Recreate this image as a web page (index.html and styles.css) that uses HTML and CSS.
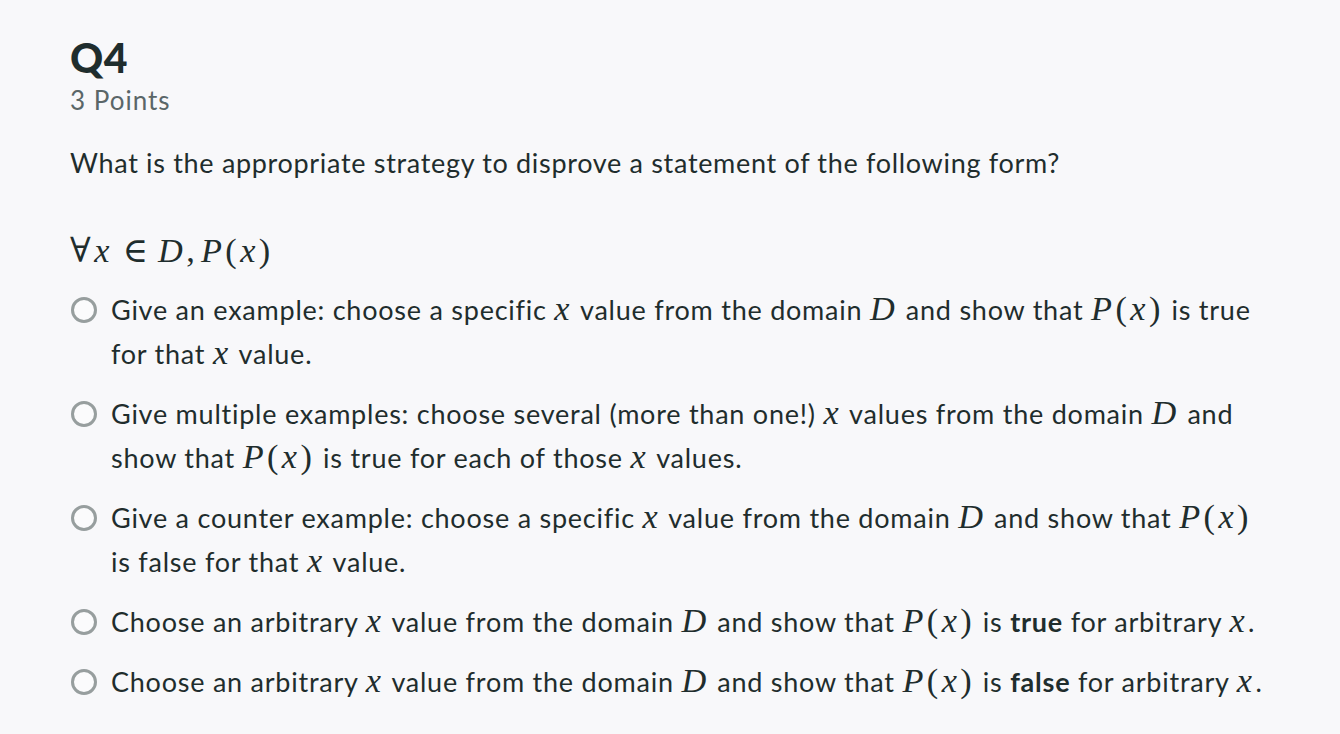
FILE: index.html
```html
<!DOCTYPE html>
<html lang="en">
<head>
<meta charset="utf-8">
<title>Q4</title>
<link rel="stylesheet" href="styles.css">
</head>
<body>
<main class="question">
  <header class="q-head">
    <h2 class="q-title">Q4</h2>
    <div class="q-points">3 Points</div>
  </header>
  <p class="q-text">What is the appropriate strategy to disprove a statement of the following form?</p>
  <p class="q-math"><span class="m"><span class="up">∀</span><i>x</i><span class="up rel">∈</span><i>D</i><span class="up punct">,</span><i>P</i><span class="up">(</span><i>x</i><span class="up">)</span></span></p>
  <ul class="options">
    <li class="option"><span class="radio"></span><span class="label">Give an example: choose a specific <span class="m"><i>x</i></span> value from the domain <span class="m"><i>D</i></span> and show that <span class="m"><i>P</i><span class="up">(</span><i>x</i><span class="up">)</span></span> is true for that <span class="m"><i>x</i></span> value.</span></li>
    <li class="option"><span class="radio"></span><span class="label">Give multiple examples: choose several (more than one!) <span class="m"><i>x</i></span> values from the domain <span class="m"><i>D</i></span> and show that <span class="m"><i>P</i><span class="up">(</span><i>x</i><span class="up">)</span></span> is true for each of those <span class="m"><i>x</i></span> values.</span></li>
    <li class="option"><span class="radio"></span><span class="label">Give a counter example: choose a specific <span class="m"><i>x</i></span> value from the domain <span class="m"><i>D</i></span> and show that <span class="m"><i>P</i><span class="up">(</span><i>x</i><span class="up">)</span></span> is false for that <span class="m"><i>x</i></span> value.</span></li>
    <li class="option"><span class="radio"></span><span class="label">Choose an arbitrary <span class="m"><i>x</i></span> value from the domain <span class="m"><i>D</i></span> and show that <span class="m"><i>P</i><span class="up">(</span><i>x</i><span class="up">)</span></span> is <strong>true</strong> for arbitrary <span class="m"><i>x</i></span>.</span></li>
    <li class="option"><span class="radio"></span><span class="label">Choose an arbitrary <span class="m"><i>x</i></span> value from the domain <span class="m"><i>D</i></span> and show that <span class="m"><i>P</i><span class="up">(</span><i>x</i><span class="up">)</span></span> is <strong>false</strong> for arbitrary <span class="m"><i>x</i></span>.</span></li>
  </ul>
</main>
</body>
</html>
```
FILE: styles.css
```css
html, body {
  margin: 0;
  padding: 0;
  background: #f8f8fa;
}
body {
  font-family: "Lato", "Open Sans", sans-serif;
  color: #1f2d2d;
}
.question {
  padding: 34px 70px 0 70px;
}
.q-title {
  margin: 0;
  font-size: 41px;
  line-height: 48px;
  font-weight: 900;
  letter-spacing: 0.5px;
  color: #1f2d2d;
}
.q-points {
  font-size: 26px;
  line-height: 36px;
  letter-spacing: 1px;
  color: #5a6668;
}
.q-text {
  margin: 23px 0 0 0;
  font-size: 27px;
  line-height: 44px;
  letter-spacing: 0.68px;
}
.q-math {
  margin: 45px 0 0 0;
  font-size: 27px;
  line-height: 44px;
}
.m {
  font-family: "Liberation Serif", "DejaVu Serif", serif;
  font-size: 1.27em;
  line-height: 1;
  letter-spacing: 0.1em;
}
.m i {
  font-style: italic;
}
.m .up {
  font-style: normal;
}
.m .rel {
  margin: 0 0.2em 0 0.28em;
}
.m .punct {
  margin-right: 0.08em;
}
.options {
  list-style: none;
  margin: 14px 0 0 0;
  padding: 0;
  display: flex;
  flex-direction: column;
  gap: 16px;
}
.option {
  display: flex;
  align-items: flex-start;
  gap: 14px;
  font-size: 27px;
  line-height: 44px;
  letter-spacing: 0.76px;
}
.radio {
  flex: none;
  width: 20px;
  height: 20px;
  margin: 9px 0 0 1px;
  border: 3px solid #979e9e;
  border-radius: 50%;
  background: #fbfbfc;
}
.label {
  flex: 1;
}
.label strong {
  font-weight: 700;
}
```
